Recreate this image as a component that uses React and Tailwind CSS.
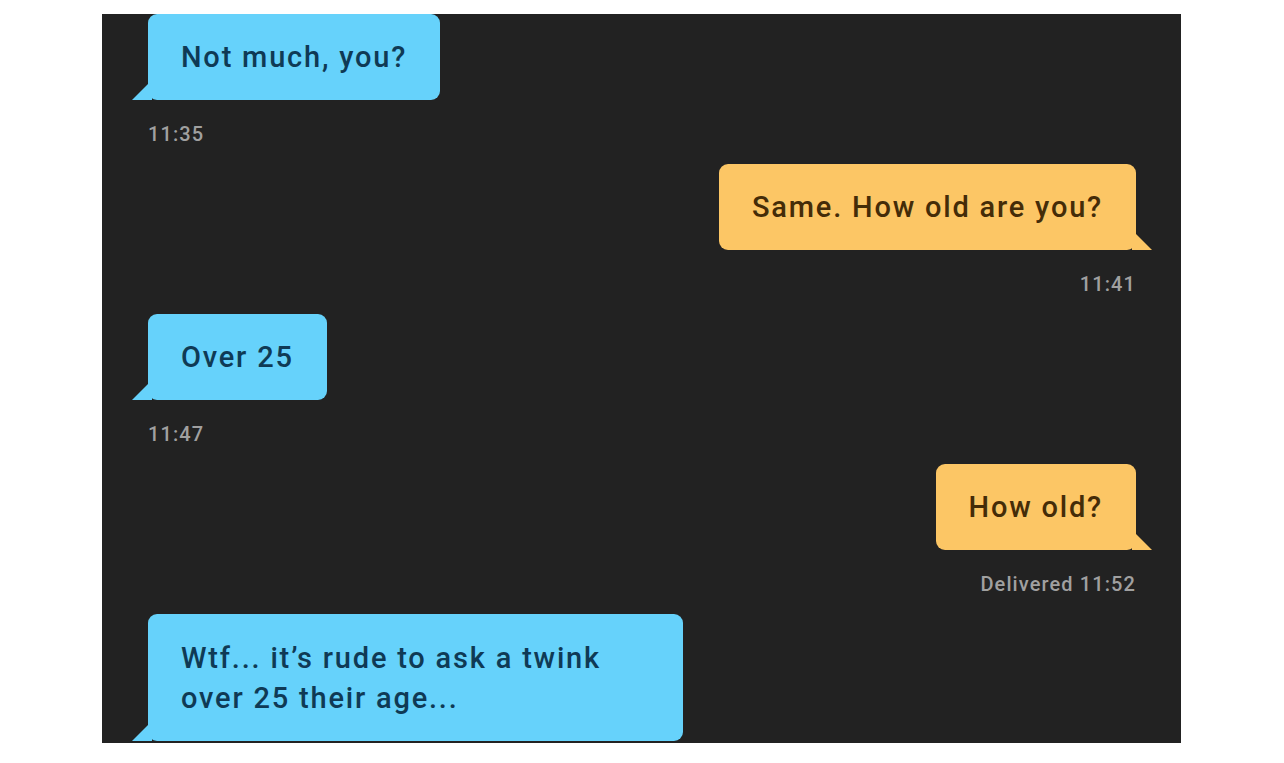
import React from "react";

const font = { fontFamily: "Roboto, 'Noto Sans', sans-serif" };

function Bubble({ side, children, className = "" }) {
  const blue = side === "left";
  return (
    <div className={`relative ${blue ? "self-start" : "self-end"}`}>
      <div
        className={`rounded-[9px] px-[33px] flex flex-col justify-center text-[29px] font-medium leading-[40px] tracking-[1.8px] ${
          blue ? "bg-[#66d2fb] text-[#0f3a55]" : "bg-[#fcc665] text-[#442c08]"
        } ${className}`}
      >
        {children}
      </div>
      {blue ? (
        <svg className="absolute bottom-0 left-[-16px]" width="20" height="17" viewBox="0 0 20 17">
          <path d="M0 17 L16 1 L20 0 L20 17 Z" fill="#66d2fb" />
        </svg>
      ) : (
        <svg className="absolute bottom-0 right-[-16px]" width="20" height="17" viewBox="0 0 20 17">
          <path d="M20 17 L4 1 L0 0 L0 17 Z" fill="#fcc665" />
        </svg>
      )}
    </div>
  );
}

function Stamp({ side, children }) {
  return (
    <div
      className={`h-[64px] pt-[24px] text-[20px] font-medium leading-[20px] tracking-[1.1px] text-[#a0a0a0] ${
        side === "left" ? "self-start" : "self-end"
      }`}
    >
      {children}
    </div>
  );
}

export default function App() {
  return (
    <div className="w-[1284px] h-[763px] bg-white pt-[14px] pl-[102px]" style={font}>
      <div className="w-[1079px] h-[729px] bg-[#222222] overflow-hidden flex flex-col pl-[46px] pr-[45px]">
        <Bubble side="left" className="h-[86px]">Not much, you?</Bubble>
        <Stamp side="left">11:35</Stamp>
        <Bubble side="right" className="h-[86px]">Same. How old are you?</Bubble>
        <Stamp side="right">11:41</Stamp>
        <Bubble side="left" className="h-[86px]">Over 25</Bubble>
        <Stamp side="left">11:47</Stamp>
        <Bubble side="right" className="h-[86px]">How old?</Bubble>
        <Stamp side="right">Delivered 11:52</Stamp>
        <Bubble side="left" className="h-[127px] w-[535px] shrink-0">
          <div>Wtf... it’s rude to ask a twink</div>
          <div>over 25 their age...</div>
        </Bubble>
      </div>
    </div>
  );
}
